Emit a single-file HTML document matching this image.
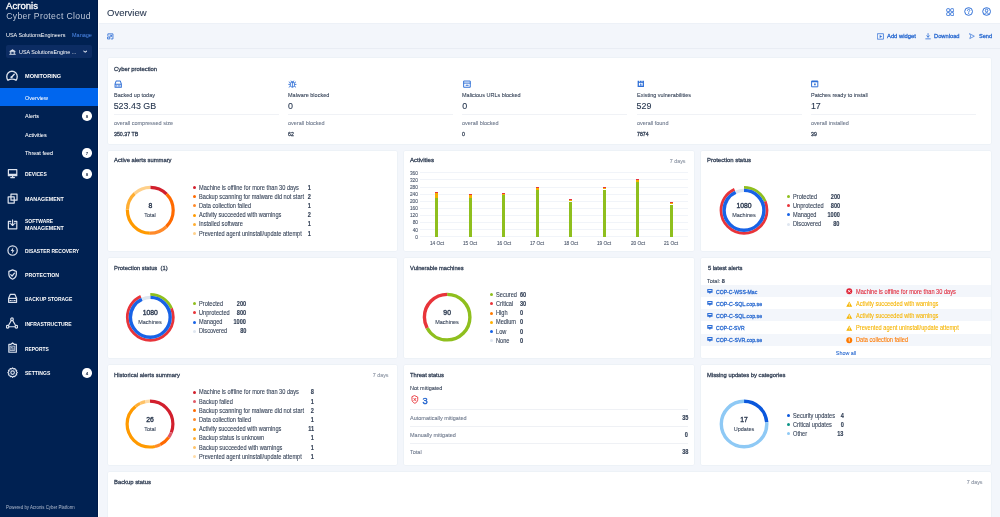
<!DOCTYPE html><html><head><meta charset="utf-8"><style>
*{margin:0;padding:0;box-sizing:border-box}
html,body{width:1000px;height:517px;overflow:hidden;background:#f3f6fb;font-family:"Liberation Sans",sans-serif}
.t{position:absolute;white-space:nowrap;line-height:1;-webkit-text-stroke:0.1px currentColor}
.t b,.b{-webkit-text-stroke:0}
.r{position:absolute}
svg{position:absolute;left:0;top:0}
</style></head><body><div id="root" style="position:absolute;left:0;top:0;width:1000px;height:517px;will-change:transform">
<div class="r" style="left:0px;top:0px;width:98.00px;height:517.00px;background:#002152;"></div>
<div class="r" style="left:96.5px;top:0px;width:1.50px;height:517.00px;background:#001a47;"></div>
<div class="r" style="left:98px;top:0px;width:902.00px;height:23.00px;background:#ffffff;"></div>
<div class="r" style="left:98px;top:23px;width:902.00px;height:1.00px;background:#edf1f7;"></div>
<div class="r" style="left:98px;top:24px;width:902.00px;height:24.00px;background:#f3f6fb;"></div>
<div class="r" style="left:98px;top:47.6px;width:902.00px;height:1.00px;background:#e9edf4;"></div>
<div class="r" style="left:98px;top:0px;width:1.00px;height:517.00px;background:#ffffff;"></div>
<div class="r" style="left:107.5px;top:58px;width:883.50px;height:86.30px;background:#ffffff;border-radius:1.2px;box-shadow:0 0 0 0.5px #e8edf4;"></div>
<div class="r" style="left:107.5px;top:150.5px;width:289.90px;height:100.70px;background:#ffffff;border-radius:1.2px;box-shadow:0 0 0 0.5px #e8edf4;"></div>
<div class="r" style="left:403.6px;top:150.5px;width:290.70px;height:100.70px;background:#ffffff;border-radius:1.2px;box-shadow:0 0 0 0.5px #e8edf4;"></div>
<div class="r" style="left:700.9px;top:150.5px;width:290.10px;height:100.70px;background:#ffffff;border-radius:1.2px;box-shadow:0 0 0 0.5px #e8edf4;"></div>
<div class="r" style="left:107.5px;top:257.8px;width:289.90px;height:100.40px;background:#ffffff;border-radius:1.2px;box-shadow:0 0 0 0.5px #e8edf4;"></div>
<div class="r" style="left:403.6px;top:257.8px;width:290.70px;height:100.40px;background:#ffffff;border-radius:1.2px;box-shadow:0 0 0 0.5px #e8edf4;"></div>
<div class="r" style="left:700.9px;top:257.8px;width:290.10px;height:100.40px;background:#ffffff;border-radius:1.2px;box-shadow:0 0 0 0.5px #e8edf4;"></div>
<div class="r" style="left:107.5px;top:364.8px;width:289.90px;height:100.30px;background:#ffffff;border-radius:1.2px;box-shadow:0 0 0 0.5px #e8edf4;"></div>
<div class="r" style="left:403.6px;top:364.8px;width:290.70px;height:100.30px;background:#ffffff;border-radius:1.2px;box-shadow:0 0 0 0.5px #e8edf4;"></div>
<div class="r" style="left:700.9px;top:364.8px;width:290.10px;height:100.30px;background:#ffffff;border-radius:1.2px;box-shadow:0 0 0 0.5px #e8edf4;"></div>
<div class="r" style="left:107.5px;top:471.7px;width:883.50px;height:128.30px;background:#ffffff;border-radius:1.2px;box-shadow:0 0 0 0.5px #e8edf4;"></div>
<div class="t" style="top:2.00px;font-size:9.200px;color:#ffffff;left:6.40px;transform:scaleX(1.0432);transform-origin:left center;-webkit-text-stroke:0.3px #fff;">Acronis</div>
<div class="t" style="top:12.00px;font-size:8.600px;color:#bec8d9;left:6.20px;letter-spacing:0.38px;-webkit-text-stroke:0;">Cyber Protect Cloud</div>
<div class="t" style="top:32.00px;font-size:6.115px;color:#ffffff;left:6.00px;transform:scaleX(0.8929);transform-origin:left center;-webkit-text-stroke:0;">USA SolutionsEngineers</div>
<div class="t" style="top:32.00px;font-size:6.160px;color:#4f8df0;left:72.00px;transform:scaleX(0.8929);transform-origin:left center;-webkit-text-stroke:0;">Manage</div>
<div class="r" style="left:5.8px;top:45.2px;width:86.40px;height:12.50px;background:#0c2c63;border-radius:2px;"></div>
<div class="t" style="top:49.00px;font-size:6.048px;color:#ffffff;left:18.60px;transform:scaleX(0.8929);transform-origin:left center;-webkit-text-stroke:0;">USA SolutionsEngine ...</div>
<div class="r" style="left:0px;top:88px;width:97.70px;height:18.40px;background:#0066ee;"></div>
<div class="t" style="top:74.00px;font-size:5.600px;color:#ffffff;font-weight:bold;-webkit-text-stroke:0;left:24.70px;transform:scaleX(0.9974);transform-origin:left center;">MONITORING</div>
<div class="t" style="top:96.00px;font-size:5.885px;color:#ffffff;left:24.70px;transform:scaleX(0.9337);transform-origin:left center;-webkit-text-stroke:0.04px #fff;">Overview</div>
<div class="t" style="top:114.00px;font-size:5.885px;color:#ffffff;left:24.70px;transform:scaleX(0.9346);transform-origin:left center;-webkit-text-stroke:0.04px #fff;">Alerts</div>
<div class="r" style="left:82.2px;top:111.3px;width:9.60px;height:9.60px;background:#ffffff;border-radius:50%;"></div>
<div class="t" style="top:115.00px;font-size:4.400px;color:#1f2f4a;font-weight:bold;-webkit-text-stroke:0;left:37.00px;width:100px;text-align:center;">8</div>
<div class="t" style="top:133.00px;font-size:5.885px;color:#ffffff;left:24.70px;transform:scaleX(0.9346);transform-origin:left center;-webkit-text-stroke:0.04px #fff;">Activities</div>
<div class="t" style="top:151.00px;font-size:5.885px;color:#ffffff;left:24.70px;transform:scaleX(0.9346);transform-origin:left center;-webkit-text-stroke:0.04px #fff;">Threat feed</div>
<div class="r" style="left:82.2px;top:148.0px;width:9.60px;height:9.60px;background:#ffffff;border-radius:50%;"></div>
<div class="t" style="top:152.00px;font-size:4.400px;color:#1f2f4a;font-weight:bold;-webkit-text-stroke:0;left:37.00px;width:100px;text-align:center;">7</div>
<div class="t" style="top:172.00px;font-size:5.600px;color:#ffffff;font-weight:bold;-webkit-text-stroke:0;left:24.70px;transform:scaleX(0.8826);transform-origin:left center;">DEVICES</div>
<div class="r" style="left:82.2px;top:169.39999999999998px;width:9.60px;height:9.60px;background:#ffffff;border-radius:50%;"></div>
<div class="t" style="top:173.00px;font-size:4.400px;color:#1f2f4a;font-weight:bold;-webkit-text-stroke:0;left:37.00px;width:100px;text-align:center;">8</div>
<div class="t" style="top:197.00px;font-size:5.600px;color:#ffffff;font-weight:bold;-webkit-text-stroke:0;left:24.70px;transform:scaleX(0.9545);transform-origin:left center;">MANAGEMENT</div>
<div class="t" style="top:219.00px;font-size:5.600px;color:#ffffff;font-weight:bold;-webkit-text-stroke:0;left:24.70px;transform:scaleX(0.8887);transform-origin:left center;">SOFTWARE</div>
<div class="t" style="top:226.00px;font-size:5.600px;color:#ffffff;font-weight:bold;-webkit-text-stroke:0;left:24.70px;transform:scaleX(0.9545);transform-origin:left center;">MANAGEMENT</div>
<div class="t" style="top:249.00px;font-size:5.600px;color:#ffffff;font-weight:bold;-webkit-text-stroke:0;left:24.70px;transform:scaleX(0.8872);transform-origin:left center;">DISASTER RECOVERY</div>
<div class="t" style="top:273.00px;font-size:5.600px;color:#ffffff;font-weight:bold;-webkit-text-stroke:0;left:24.70px;transform:scaleX(0.9289);transform-origin:left center;">PROTECTION</div>
<div class="t" style="top:297.00px;font-size:5.600px;color:#ffffff;font-weight:bold;-webkit-text-stroke:0;left:24.70px;transform:scaleX(0.8943);transform-origin:left center;">BACKUP STORAGE</div>
<div class="t" style="top:322.00px;font-size:5.600px;color:#ffffff;font-weight:bold;-webkit-text-stroke:0;left:24.70px;transform:scaleX(0.9043);transform-origin:left center;">INFRASTRUCTURE</div>
<div class="t" style="top:347.00px;font-size:5.600px;color:#ffffff;font-weight:bold;-webkit-text-stroke:0;left:24.70px;transform:scaleX(0.8755);transform-origin:left center;">REPORTS</div>
<div class="t" style="top:371.00px;font-size:5.600px;color:#ffffff;font-weight:bold;-webkit-text-stroke:0;left:24.70px;transform:scaleX(0.9035);transform-origin:left center;">SETTINGS</div>
<div class="r" style="left:82.2px;top:368.09999999999997px;width:9.60px;height:9.60px;background:#ffffff;border-radius:50%;"></div>
<div class="t" style="top:372.00px;font-size:4.400px;color:#1f2f4a;font-weight:bold;-webkit-text-stroke:0;left:37.00px;width:100px;text-align:center;">4</div>
<div class="t" style="top:506.00px;font-size:4.894px;color:#b3bed0;left:6.00px;transform:scaleX(0.8929);transform-origin:left center;-webkit-text-stroke:0;">Powered by Acronis Cyber Platform</div>
<div class="t" style="top:8.00px;font-size:9.600px;color:#2b3a52;left:107.20px;transform:scaleX(0.9898);transform-origin:left center;">Overview</div>
<div class="t" style="top:33.00px;font-size:6.123px;color:#2a6ad0;left:886.90px;transform:scaleX(0.9533);transform-origin:left center;-webkit-text-stroke:0.3px currentColor;">Add widget</div>
<div class="t" style="top:33.00px;font-size:6.123px;color:#2a6ad0;left:934.40px;transform:scaleX(0.9403);transform-origin:left center;-webkit-text-stroke:0.3px currentColor;">Download</div>
<div class="t" style="top:33.00px;font-size:6.123px;color:#2a6ad0;left:978.60px;transform:scaleX(0.9163);transform-origin:left center;-webkit-text-stroke:0.3px currentColor;">Send</div>
<div class="t" style="top:66.00px;font-size:6.059px;color:#364358;left:113.70px;transform:scaleX(0.9719);transform-origin:left center;-webkit-text-stroke:0.3px currentColor;">Cyber protection</div>
<div class="t" style="top:92.00px;font-size:6.160px;color:#364358;left:113.70px;transform:scaleX(0.8929);transform-origin:left center;">Backed up today</div>
<div class="t" style="top:102.00px;font-size:8.900px;color:#26364f;left:113.70px;">523.43 GB</div>
<div class="r" style="left:113.7px;top:114.2px;width:165.00px;height:0.70px;background:#f0f2f6;"></div>
<div class="t" style="top:120.00px;font-size:6.160px;color:#6f7a8d;left:113.70px;transform:scaleX(0.8929);transform-origin:left center;">overall compressed size</div>
<div class="t" style="top:132.00px;font-size:5.728px;color:#364358;left:113.70px;transform:scaleX(0.9222);transform-origin:left center;-webkit-text-stroke:0.3px currentColor;">350.37 TB</div>
<div class="t" style="top:92.00px;font-size:6.160px;color:#364358;left:288.00px;transform:scaleX(0.8929);transform-origin:left center;">Malware blocked</div>
<div class="t" style="top:102.00px;font-size:8.900px;color:#26364f;left:288.00px;">0</div>
<div class="r" style="left:288.0px;top:114.2px;width:165.00px;height:0.70px;background:#f0f2f6;"></div>
<div class="t" style="top:120.00px;font-size:6.160px;color:#6f7a8d;left:288.00px;transform:scaleX(0.8929);transform-origin:left center;">overall blocked</div>
<div class="t" style="top:132.00px;font-size:5.728px;color:#364358;left:288.00px;transform:scaleX(0.9078);transform-origin:left center;-webkit-text-stroke:0.3px currentColor;">62</div>
<div class="t" style="top:92.00px;font-size:6.160px;color:#364358;left:462.30px;transform:scaleX(0.8929);transform-origin:left center;">Malicious URLs blocked</div>
<div class="t" style="top:102.00px;font-size:8.900px;color:#26364f;left:462.30px;">0</div>
<div class="r" style="left:462.3px;top:114.2px;width:165.00px;height:0.70px;background:#f0f2f6;"></div>
<div class="t" style="top:120.00px;font-size:6.160px;color:#6f7a8d;left:462.30px;transform:scaleX(0.8929);transform-origin:left center;">overall blocked</div>
<div class="t" style="top:132.00px;font-size:5.728px;color:#364358;left:462.30px;transform:scaleX(0.9078);transform-origin:left center;-webkit-text-stroke:0.3px currentColor;">0</div>
<div class="t" style="top:92.00px;font-size:6.160px;color:#364358;left:636.60px;transform:scaleX(0.8929);transform-origin:left center;">Existing vulnerabilities</div>
<div class="t" style="top:102.00px;font-size:8.900px;color:#26364f;left:636.60px;">529</div>
<div class="r" style="left:636.6000000000001px;top:114.2px;width:165.00px;height:0.70px;background:#f0f2f6;"></div>
<div class="t" style="top:120.00px;font-size:6.160px;color:#6f7a8d;left:636.60px;transform:scaleX(0.8929);transform-origin:left center;">overall found</div>
<div class="t" style="top:132.00px;font-size:5.728px;color:#364358;left:636.60px;transform:scaleX(0.9078);transform-origin:left center;-webkit-text-stroke:0.3px currentColor;">7874</div>
<div class="t" style="top:92.00px;font-size:6.160px;color:#364358;left:810.90px;transform:scaleX(0.8929);transform-origin:left center;">Patches ready to install</div>
<div class="t" style="top:102.00px;font-size:8.900px;color:#26364f;left:810.90px;">17</div>
<div class="r" style="left:810.9000000000001px;top:114.2px;width:165.00px;height:0.70px;background:#f0f2f6;"></div>
<div class="t" style="top:120.00px;font-size:6.160px;color:#6f7a8d;left:810.90px;transform:scaleX(0.8929);transform-origin:left center;">overall installed</div>
<div class="t" style="top:132.00px;font-size:5.728px;color:#364358;left:810.90px;transform:scaleX(0.9078);transform-origin:left center;-webkit-text-stroke:0.3px currentColor;">39</div>
<div class="t" style="top:157.00px;font-size:6.059px;color:#364358;left:113.50px;transform:scaleX(0.9671);transform-origin:left center;-webkit-text-stroke:0.3px currentColor;">Active alerts summary</div>
<div class="t" style="top:157.00px;font-size:6.059px;color:#364358;left:410.00px;transform:scaleX(1.0044);transform-origin:left center;-webkit-text-stroke:0.3px currentColor;">Activities</div>
<div class="t" style="top:159.00px;font-size:5.936px;color:#8a93a2;right:314.40px;transform:scaleX(0.8929);transform-origin:right center;">7 days</div>
<div class="t" style="top:157.00px;font-size:6.059px;color:#364358;left:707.00px;transform:scaleX(0.9774);transform-origin:left center;-webkit-text-stroke:0.3px currentColor;">Protection status</div>
<div class="t" style="top:265.00px;font-size:6.059px;color:#364358;left:113.50px;transform:scaleX(0.9608);transform-origin:left center;-webkit-text-stroke:0.3px currentColor;">Protection status&nbsp; (1)</div>
<div class="t" style="top:265.00px;font-size:6.059px;color:#364358;left:410.00px;transform:scaleX(0.9550);transform-origin:left center;-webkit-text-stroke:0.3px currentColor;">Vulnerable machines</div>
<div class="t" style="top:265.00px;font-size:6.059px;color:#364358;left:707.50px;transform:scaleX(0.9580);transform-origin:left center;-webkit-text-stroke:0.3px currentColor;">5 latest alerts</div>
<div class="t" style="top:372.00px;font-size:6.059px;color:#364358;left:113.50px;transform:scaleX(0.9710);transform-origin:left center;-webkit-text-stroke:0.3px currentColor;">Historical alerts summary</div>
<div class="t" style="top:373.00px;font-size:5.936px;color:#8a93a2;right:611.40px;transform:scaleX(0.8929);transform-origin:right center;">7 days</div>
<div class="t" style="top:372.00px;font-size:6.059px;color:#364358;left:410.00px;transform:scaleX(0.9590);transform-origin:left center;-webkit-text-stroke:0.3px currentColor;">Threat status</div>
<div class="t" style="top:372.00px;font-size:6.059px;color:#364358;left:707.00px;transform:scaleX(0.9646);transform-origin:left center;-webkit-text-stroke:0.3px currentColor;">Missing updates by categories</div>
<div class="t" style="top:479.00px;font-size:6.059px;color:#364358;left:113.60px;transform:scaleX(0.9699);transform-origin:left center;-webkit-text-stroke:0.3px currentColor;">Backup status</div>
<div class="t" style="top:480.00px;font-size:5.936px;color:#8a93a2;right:17.90px;transform:scaleX(0.8929);transform-origin:right center;">7 days</div>
<div class="t" style="top:203.00px;font-size:6.800px;color:#364358;left:100.30px;width:100px;text-align:center;-webkit-text-stroke:0.4px currentColor;">8</div>
<div class="t" style="top:212.00px;font-size:6.160px;color:#364358;left:100.30px;width:100px;text-align:center;transform:scaleX(0.8929);transform-origin:center center;">Total</div>
<div class="r" style="left:193px;top:186.0px;width:3.00px;height:3.00px;background:#d21f2d;border-radius:50%;"></div>
<div class="t" style="top:185.00px;font-size:6.328px;color:#364358;left:199.10px;transform:scaleX(0.8929);transform-origin:left center;">Machine is offline for more than 30 days</div>
<div class="t" style="top:185.00px;font-size:6.720px;color:#364358;font-weight:bold;-webkit-text-stroke:0;right:689.00px;transform:scaleX(0.8333);transform-origin:right center;-webkit-text-stroke:0.15px currentColor;">1</div>
<div class="r" style="left:193px;top:195.2px;width:3.00px;height:3.00px;background:#ff6a00;border-radius:50%;"></div>
<div class="t" style="top:194.00px;font-size:6.328px;color:#364358;left:199.10px;transform:scaleX(0.8929);transform-origin:left center;">Backup scanning for malware did not start</div>
<div class="t" style="top:194.00px;font-size:6.720px;color:#364358;font-weight:bold;-webkit-text-stroke:0;right:689.00px;transform:scaleX(0.8333);transform-origin:right center;-webkit-text-stroke:0.15px currentColor;">2</div>
<div class="r" style="left:193px;top:204.4px;width:3.00px;height:3.00px;background:#ff8a2a;border-radius:50%;"></div>
<div class="t" style="top:203.00px;font-size:6.328px;color:#364358;left:199.10px;transform:scaleX(0.8929);transform-origin:left center;">Data collection failed</div>
<div class="t" style="top:203.00px;font-size:6.720px;color:#364358;font-weight:bold;-webkit-text-stroke:0;right:689.00px;transform:scaleX(0.8333);transform-origin:right center;-webkit-text-stroke:0.15px currentColor;">1</div>
<div class="r" style="left:193px;top:213.6px;width:3.00px;height:3.00px;background:#ff9a00;border-radius:50%;"></div>
<div class="t" style="top:212.00px;font-size:6.328px;color:#364358;left:199.10px;transform:scaleX(0.8929);transform-origin:left center;">Activity succeeded with warnings</div>
<div class="t" style="top:212.00px;font-size:6.720px;color:#364358;font-weight:bold;-webkit-text-stroke:0;right:689.00px;transform:scaleX(0.8333);transform-origin:right center;-webkit-text-stroke:0.15px currentColor;">2</div>
<div class="r" style="left:193px;top:222.8px;width:3.00px;height:3.00px;background:#ffae33;border-radius:50%;"></div>
<div class="t" style="top:221.00px;font-size:6.328px;color:#364358;left:199.10px;transform:scaleX(0.8929);transform-origin:left center;">Installed software</div>
<div class="t" style="top:221.00px;font-size:6.720px;color:#364358;font-weight:bold;-webkit-text-stroke:0;right:689.00px;transform:scaleX(0.8333);transform-origin:right center;-webkit-text-stroke:0.15px currentColor;">1</div>
<div class="r" style="left:193px;top:232.0px;width:3.00px;height:3.00px;background:#ffd08a;border-radius:50%;"></div>
<div class="t" style="top:231.00px;font-size:6.328px;color:#364358;left:199.10px;transform:scaleX(0.8929);transform-origin:left center;">Prevented agent uninstall/update attempt</div>
<div class="t" style="top:231.00px;font-size:6.720px;color:#364358;font-weight:bold;-webkit-text-stroke:0;right:689.00px;transform:scaleX(0.8333);transform-origin:right center;-webkit-text-stroke:0.15px currentColor;">1</div>
<div class="t" style="top:203.00px;font-size:6.800px;color:#364358;left:694.00px;width:100px;text-align:center;-webkit-text-stroke:0.4px currentColor;">1080</div>
<div class="t" style="top:212.00px;font-size:6.160px;color:#364358;left:694.00px;width:100px;text-align:center;transform:scaleX(0.8929);transform-origin:center center;">Machines</div>
<div class="r" style="left:786.7px;top:195.0px;width:3.00px;height:3.00px;background:#8fbf1e;border-radius:50%;"></div>
<div class="t" style="top:194.00px;font-size:6.328px;color:#364358;left:793.00px;transform:scaleX(0.8929);transform-origin:left center;">Protected</div>
<div class="t" style="top:194.00px;font-size:6.720px;color:#364358;font-weight:bold;-webkit-text-stroke:0;right:160.20px;transform:scaleX(0.8333);transform-origin:right center;-webkit-text-stroke:0.15px currentColor;">200</div>
<div class="r" style="left:786.7px;top:204.23px;width:3.00px;height:3.00px;background:#e8343a;border-radius:50%;"></div>
<div class="t" style="top:203.00px;font-size:6.328px;color:#364358;left:793.00px;transform:scaleX(0.8929);transform-origin:left center;">Unprotected</div>
<div class="t" style="top:203.00px;font-size:6.720px;color:#364358;font-weight:bold;-webkit-text-stroke:0;right:160.20px;transform:scaleX(0.8333);transform-origin:right center;-webkit-text-stroke:0.15px currentColor;">800</div>
<div class="r" style="left:786.7px;top:213.46px;width:3.00px;height:3.00px;background:#1863e6;border-radius:50%;"></div>
<div class="t" style="top:212.00px;font-size:6.328px;color:#364358;left:793.00px;transform:scaleX(0.8929);transform-origin:left center;">Managed</div>
<div class="t" style="top:212.00px;font-size:6.720px;color:#364358;font-weight:bold;-webkit-text-stroke:0;right:160.20px;transform:scaleX(0.8333);transform-origin:right center;-webkit-text-stroke:0.15px currentColor;">1000</div>
<div class="r" style="left:786.7px;top:222.69px;width:3.00px;height:3.00px;background:#dfe6f0;border-radius:50%;"></div>
<div class="t" style="top:221.00px;font-size:6.328px;color:#364358;left:793.00px;transform:scaleX(0.8929);transform-origin:left center;">Discovered</div>
<div class="t" style="top:221.00px;font-size:6.720px;color:#364358;font-weight:bold;-webkit-text-stroke:0;right:160.20px;transform:scaleX(0.8333);transform-origin:right center;-webkit-text-stroke:0.15px currentColor;">80</div>
<div class="t" style="top:310.00px;font-size:6.800px;color:#364358;left:100.30px;width:100px;text-align:center;-webkit-text-stroke:0.4px currentColor;">1080</div>
<div class="t" style="top:319.00px;font-size:6.160px;color:#364358;left:100.30px;width:100px;text-align:center;transform:scaleX(0.8929);transform-origin:center center;">Machines</div>
<div class="r" style="left:193.0px;top:302.1px;width:3.00px;height:3.00px;background:#8fbf1e;border-radius:50%;"></div>
<div class="t" style="top:301.00px;font-size:6.328px;color:#364358;left:199.30px;transform:scaleX(0.8929);transform-origin:left center;">Protected</div>
<div class="t" style="top:301.00px;font-size:6.720px;color:#364358;font-weight:bold;-webkit-text-stroke:0;right:754.00px;transform:scaleX(0.8333);transform-origin:right center;-webkit-text-stroke:0.15px currentColor;">200</div>
<div class="r" style="left:193.0px;top:311.33000000000004px;width:3.00px;height:3.00px;background:#e8343a;border-radius:50%;"></div>
<div class="t" style="top:310.00px;font-size:6.328px;color:#364358;left:199.30px;transform:scaleX(0.8929);transform-origin:left center;">Unprotected</div>
<div class="t" style="top:310.00px;font-size:6.720px;color:#364358;font-weight:bold;-webkit-text-stroke:0;right:754.00px;transform:scaleX(0.8333);transform-origin:right center;-webkit-text-stroke:0.15px currentColor;">800</div>
<div class="r" style="left:193.0px;top:320.56px;width:3.00px;height:3.00px;background:#1863e6;border-radius:50%;"></div>
<div class="t" style="top:319.00px;font-size:6.328px;color:#364358;left:199.30px;transform:scaleX(0.8929);transform-origin:left center;">Managed</div>
<div class="t" style="top:319.00px;font-size:6.720px;color:#364358;font-weight:bold;-webkit-text-stroke:0;right:754.00px;transform:scaleX(0.8333);transform-origin:right center;-webkit-text-stroke:0.15px currentColor;">1000</div>
<div class="r" style="left:193.0px;top:329.79px;width:3.00px;height:3.00px;background:#dfe6f0;border-radius:50%;"></div>
<div class="t" style="top:328.00px;font-size:6.328px;color:#364358;left:199.30px;transform:scaleX(0.8929);transform-origin:left center;">Discovered</div>
<div class="t" style="top:328.00px;font-size:6.720px;color:#364358;font-weight:bold;-webkit-text-stroke:0;right:754.00px;transform:scaleX(0.8333);transform-origin:right center;-webkit-text-stroke:0.15px currentColor;">80</div>
<div class="r" style="left:420.3px;top:172.35px;width:267.70px;height:0.50px;background:#f1f4f9;"></div>
<div class="t" style="top:171.00px;font-size:5.376px;color:#4b566a;right:581.60px;transform:scaleX(0.8929);transform-origin:right center;">360</div>
<div class="r" style="left:420.3px;top:179.4611111111111px;width:267.70px;height:0.50px;background:#f1f4f9;"></div>
<div class="t" style="top:178.00px;font-size:5.376px;color:#4b566a;right:581.60px;transform:scaleX(0.8929);transform-origin:right center;">320</div>
<div class="r" style="left:420.3px;top:186.57222222222222px;width:267.70px;height:0.50px;background:#f1f4f9;"></div>
<div class="t" style="top:185.00px;font-size:5.376px;color:#4b566a;right:581.60px;transform:scaleX(0.8929);transform-origin:right center;">280</div>
<div class="r" style="left:420.3px;top:193.68333333333334px;width:267.70px;height:0.50px;background:#f1f4f9;"></div>
<div class="t" style="top:192.00px;font-size:5.376px;color:#4b566a;right:581.60px;transform:scaleX(0.8929);transform-origin:right center;">240</div>
<div class="r" style="left:420.3px;top:200.79444444444442px;width:267.70px;height:0.50px;background:#f1f4f9;"></div>
<div class="t" style="top:199.00px;font-size:5.376px;color:#4b566a;right:581.60px;transform:scaleX(0.8929);transform-origin:right center;">200</div>
<div class="r" style="left:420.3px;top:207.90555555555557px;width:267.70px;height:0.50px;background:#f1f4f9;"></div>
<div class="t" style="top:206.00px;font-size:5.376px;color:#4b566a;right:581.60px;transform:scaleX(0.8929);transform-origin:right center;">160</div>
<div class="r" style="left:420.3px;top:215.01666666666665px;width:267.70px;height:0.50px;background:#f1f4f9;"></div>
<div class="t" style="top:213.00px;font-size:5.376px;color:#4b566a;right:581.60px;transform:scaleX(0.8929);transform-origin:right center;">120</div>
<div class="r" style="left:420.3px;top:222.12777777777777px;width:267.70px;height:0.50px;background:#f1f4f9;"></div>
<div class="t" style="top:220.00px;font-size:5.376px;color:#4b566a;right:581.60px;transform:scaleX(0.8929);transform-origin:right center;">80</div>
<div class="r" style="left:420.3px;top:229.23888888888888px;width:267.70px;height:0.50px;background:#f1f4f9;"></div>
<div class="t" style="top:228.00px;font-size:5.376px;color:#4b566a;right:581.60px;transform:scaleX(0.8929);transform-origin:right center;">40</div>
<div class="r" style="left:420.3px;top:236.35px;width:267.70px;height:0.50px;background:#f1f4f9;"></div>
<div class="t" style="top:235.00px;font-size:5.376px;color:#4b566a;right:581.60px;transform:scaleX(0.8929);transform-origin:right center;">0</div>
<div class="r" style="left:435.1px;top:191.8px;width:3.00px;height:1.20px;background:#e8343a;"></div>
<div class="r" style="left:435.1px;top:193px;width:3.00px;height:4.50px;background:#f5b000;"></div>
<div class="r" style="left:435.1px;top:197.5px;width:3.00px;height:39.10px;background:#8fbf1e;"></div>
<div class="t" style="top:241.00px;font-size:5.376px;color:#4b566a;left:386.60px;width:100px;text-align:center;transform:scaleX(0.8929);transform-origin:center center;">14 Oct</div>
<div class="r" style="left:468.65000000000003px;top:193.9px;width:3.00px;height:1.40px;background:#e8343a;"></div>
<div class="r" style="left:468.65000000000003px;top:195.3px;width:3.00px;height:2.60px;background:#f5b000;"></div>
<div class="r" style="left:468.65000000000003px;top:197.9px;width:3.00px;height:38.70px;background:#8fbf1e;"></div>
<div class="t" style="top:241.00px;font-size:5.376px;color:#4b566a;left:420.15px;width:100px;text-align:center;transform:scaleX(0.8929);transform-origin:center center;">15 Oct</div>
<div class="r" style="left:502.20000000000005px;top:192.8px;width:3.00px;height:1.20px;background:#e8343a;"></div>
<div class="r" style="left:502.20000000000005px;top:194.0px;width:3.00px;height:0.70px;background:#f5b000;"></div>
<div class="r" style="left:502.20000000000005px;top:194.7px;width:3.00px;height:41.90px;background:#8fbf1e;"></div>
<div class="t" style="top:241.00px;font-size:5.376px;color:#4b566a;left:453.70px;width:100px;text-align:center;transform:scaleX(0.8929);transform-origin:center center;">16 Oct</div>
<div class="r" style="left:535.75px;top:187px;width:3.00px;height:1.20px;background:#e8343a;"></div>
<div class="r" style="left:535.75px;top:188.2px;width:3.00px;height:1.80px;background:#f5b000;"></div>
<div class="r" style="left:535.75px;top:190px;width:3.00px;height:46.60px;background:#8fbf1e;"></div>
<div class="t" style="top:241.00px;font-size:5.376px;color:#4b566a;left:487.25px;width:100px;text-align:center;transform:scaleX(0.8929);transform-origin:center center;">17 Oct</div>
<div class="r" style="left:569.3px;top:199px;width:3.00px;height:1.20px;background:#e8343a;"></div>
<div class="r" style="left:569.3px;top:200.2px;width:3.00px;height:1.30px;background:#f5b000;"></div>
<div class="r" style="left:569.3px;top:201.5px;width:3.00px;height:35.10px;background:#8fbf1e;"></div>
<div class="t" style="top:241.00px;font-size:5.376px;color:#4b566a;left:520.80px;width:100px;text-align:center;transform:scaleX(0.8929);transform-origin:center center;">18 Oct</div>
<div class="r" style="left:602.85px;top:187px;width:3.00px;height:1.20px;background:#e8343a;"></div>
<div class="r" style="left:602.85px;top:188.2px;width:3.00px;height:1.30px;background:#f5b000;"></div>
<div class="r" style="left:602.85px;top:189.5px;width:3.00px;height:47.10px;background:#8fbf1e;"></div>
<div class="t" style="top:241.00px;font-size:5.376px;color:#4b566a;left:554.35px;width:100px;text-align:center;transform:scaleX(0.8929);transform-origin:center center;">19 Oct</div>
<div class="r" style="left:636.4px;top:178.6px;width:3.00px;height:1.40px;background:#e8343a;"></div>
<div class="r" style="left:636.4px;top:180px;width:3.00px;height:1.70px;background:#f5b000;"></div>
<div class="r" style="left:636.4px;top:181.7px;width:3.00px;height:54.90px;background:#8fbf1e;"></div>
<div class="t" style="top:241.00px;font-size:5.376px;color:#4b566a;left:587.90px;width:100px;text-align:center;transform:scaleX(0.8929);transform-origin:center center;">20 Oct</div>
<div class="r" style="left:669.95px;top:202.1px;width:3.00px;height:1.10px;background:#e8343a;"></div>
<div class="r" style="left:669.95px;top:203.2px;width:3.00px;height:1.30px;background:#f5b000;"></div>
<div class="r" style="left:669.95px;top:204.5px;width:3.00px;height:32.10px;background:#8fbf1e;"></div>
<div class="t" style="top:241.00px;font-size:5.376px;color:#4b566a;left:621.45px;width:100px;text-align:center;transform:scaleX(0.8929);transform-origin:center center;">21 Oct</div>
<div class="t" style="top:310.00px;font-size:6.800px;color:#364358;left:397.15px;width:100px;text-align:center;-webkit-text-stroke:0.4px currentColor;">90</div>
<div class="t" style="top:319.00px;font-size:6.160px;color:#364358;left:397.15px;width:100px;text-align:center;transform:scaleX(0.8929);transform-origin:center center;">Machines</div>
<div class="r" style="left:489.5px;top:293.1px;width:3.00px;height:3.00px;background:#8fbf1e;border-radius:50%;"></div>
<div class="t" style="top:292.00px;font-size:6.328px;color:#364358;left:496.00px;transform:scaleX(0.8929);transform-origin:left center;">Secured</div>
<div class="t" style="top:292.00px;font-size:6.720px;color:#364358;font-weight:bold;-webkit-text-stroke:0;left:520.00px;transform:scaleX(0.8333);transform-origin:left center;-webkit-text-stroke:0.15px currentColor;">60</div>
<div class="r" style="left:489.5px;top:302.3px;width:3.00px;height:3.00px;background:#e8343a;border-radius:50%;"></div>
<div class="t" style="top:301.00px;font-size:6.328px;color:#364358;left:496.00px;transform:scaleX(0.8929);transform-origin:left center;">Critical</div>
<div class="t" style="top:301.00px;font-size:6.720px;color:#364358;font-weight:bold;-webkit-text-stroke:0;left:520.00px;transform:scaleX(0.8333);transform-origin:left center;-webkit-text-stroke:0.15px currentColor;">30</div>
<div class="r" style="left:489.5px;top:311.5px;width:3.00px;height:3.00px;background:#ff7a00;border-radius:50%;"></div>
<div class="t" style="top:310.00px;font-size:6.328px;color:#364358;left:496.00px;transform:scaleX(0.8929);transform-origin:left center;">High</div>
<div class="t" style="top:310.00px;font-size:6.720px;color:#364358;font-weight:bold;-webkit-text-stroke:0;left:520.00px;transform:scaleX(0.8333);transform-origin:left center;-webkit-text-stroke:0.15px currentColor;">0</div>
<div class="r" style="left:489.5px;top:320.70000000000005px;width:3.00px;height:3.00px;background:#ffb000;border-radius:50%;"></div>
<div class="t" style="top:319.00px;font-size:6.328px;color:#364358;left:496.00px;transform:scaleX(0.8929);transform-origin:left center;">Medium</div>
<div class="t" style="top:319.00px;font-size:6.720px;color:#364358;font-weight:bold;-webkit-text-stroke:0;left:520.00px;transform:scaleX(0.8333);transform-origin:left center;-webkit-text-stroke:0.15px currentColor;">0</div>
<div class="r" style="left:489.5px;top:329.90000000000003px;width:3.00px;height:3.00px;background:#1863e6;border-radius:50%;"></div>
<div class="t" style="top:329.00px;font-size:6.328px;color:#364358;left:496.00px;transform:scaleX(0.8929);transform-origin:left center;">Low</div>
<div class="t" style="top:329.00px;font-size:6.720px;color:#364358;font-weight:bold;-webkit-text-stroke:0;left:520.00px;transform:scaleX(0.8333);transform-origin:left center;-webkit-text-stroke:0.15px currentColor;">0</div>
<div class="r" style="left:489.5px;top:339.1px;width:3.00px;height:3.00px;background:#dfe6f0;border-radius:50%;"></div>
<div class="t" style="top:338.00px;font-size:6.328px;color:#364358;left:496.00px;transform:scaleX(0.8929);transform-origin:left center;">None</div>
<div class="t" style="top:338.00px;font-size:6.720px;color:#364358;font-weight:bold;-webkit-text-stroke:0;left:520.00px;transform:scaleX(0.8333);transform-origin:left center;-webkit-text-stroke:0.15px currentColor;">0</div>
<div class="t" style="top:278.00px;font-size:6.160px;color:#364358;left:707.30px;transform:scaleX(0.8929);transform-origin:left center;">Total: <b style="-webkit-text-stroke:0.2px currentColor">8</b></div>
<div class="r" style="left:701px;top:284.8px;width:290.00px;height:12.18px;background:#f3f6fb;"></div>
<div class="t" style="top:290.00px;font-size:5.826px;color:#2a6ad0;left:716.20px;transform:scaleX(0.8814);transform-origin:left center;-webkit-text-stroke:0.3px currentColor;">COP-C-WSS-Mac</div>
<div class="t" style="top:289.00px;font-size:6.328px;color:#e0283a;left:855.70px;transform:scaleX(0.8929);transform-origin:left center;">Machine is offline for more than 30 days</div>
<div class="t" style="top:302.00px;font-size:5.826px;color:#2a6ad0;left:716.20px;transform:scaleX(0.9029);transform-origin:left center;-webkit-text-stroke:0.3px currentColor;">COP-C-SQL.cop.se</div>
<div class="t" style="top:301.00px;font-size:6.328px;color:#f5b400;left:855.70px;transform:scaleX(0.8929);transform-origin:left center;">Activity succeeded with warnings</div>
<div class="r" style="left:701px;top:309.16px;width:290.00px;height:12.18px;background:#f3f6fb;"></div>
<div class="t" style="top:314.00px;font-size:5.826px;color:#2a6ad0;left:716.20px;transform:scaleX(0.9029);transform-origin:left center;-webkit-text-stroke:0.3px currentColor;">COP-C-SQL.cop.se</div>
<div class="t" style="top:313.00px;font-size:6.328px;color:#f5b400;left:855.70px;transform:scaleX(0.8929);transform-origin:left center;">Activity succeeded with warnings</div>
<div class="t" style="top:326.00px;font-size:5.826px;color:#2a6ad0;left:716.20px;transform:scaleX(0.8754);transform-origin:left center;-webkit-text-stroke:0.3px currentColor;">COP-C-SVR</div>
<div class="t" style="top:325.00px;font-size:6.328px;color:#f5b400;left:855.70px;transform:scaleX(0.8929);transform-origin:left center;">Prevented agent uninstall/update attempt</div>
<div class="r" style="left:701px;top:333.52px;width:290.00px;height:12.18px;background:#f3f6fb;"></div>
<div class="t" style="top:338.00px;font-size:5.826px;color:#2a6ad0;left:716.20px;transform:scaleX(0.8973);transform-origin:left center;-webkit-text-stroke:0.3px currentColor;">COP-C-SVR.cop.se</div>
<div class="t" style="top:337.00px;font-size:6.328px;color:#ff7a00;left:855.70px;transform:scaleX(0.8929);transform-origin:left center;">Data collection failed</div>
<div class="t" style="top:350.00px;font-size:6.048px;color:#2a6ad0;left:796.00px;width:100px;text-align:center;transform:scaleX(0.8929);transform-origin:center center;">Show all</div>
<div class="t" style="top:417.00px;font-size:6.800px;color:#364358;left:100.00px;width:100px;text-align:center;-webkit-text-stroke:0.4px currentColor;">26</div>
<div class="t" style="top:426.00px;font-size:6.160px;color:#364358;left:100.00px;width:100px;text-align:center;transform:scaleX(0.8929);transform-origin:center center;">Total</div>
<div class="r" style="left:193px;top:390.8px;width:3.00px;height:3.00px;background:#d21f2d;border-radius:50%;"></div>
<div class="t" style="top:389.00px;font-size:6.328px;color:#364358;left:199.10px;transform:scaleX(0.8929);transform-origin:left center;">Machine is offline for more than 30 days</div>
<div class="t" style="top:389.00px;font-size:6.720px;color:#364358;font-weight:bold;-webkit-text-stroke:0;right:686.40px;transform:scaleX(0.8333);transform-origin:right center;-webkit-text-stroke:0.15px currentColor;">8</div>
<div class="r" style="left:193px;top:400.01px;width:3.00px;height:3.00px;background:#e05a68;border-radius:50%;"></div>
<div class="t" style="top:399.00px;font-size:6.328px;color:#364358;left:199.10px;transform:scaleX(0.8929);transform-origin:left center;">Backup failed</div>
<div class="t" style="top:399.00px;font-size:6.720px;color:#364358;font-weight:bold;-webkit-text-stroke:0;right:686.40px;transform:scaleX(0.8333);transform-origin:right center;-webkit-text-stroke:0.15px currentColor;">1</div>
<div class="r" style="left:193px;top:409.22px;width:3.00px;height:3.00px;background:#ff6a00;border-radius:50%;"></div>
<div class="t" style="top:408.00px;font-size:6.328px;color:#364358;left:199.10px;transform:scaleX(0.8929);transform-origin:left center;">Backup scanning for malware did not start</div>
<div class="t" style="top:408.00px;font-size:6.720px;color:#364358;font-weight:bold;-webkit-text-stroke:0;right:686.40px;transform:scaleX(0.8333);transform-origin:right center;-webkit-text-stroke:0.15px currentColor;">2</div>
<div class="r" style="left:193px;top:418.43px;width:3.00px;height:3.00px;background:#ff8a2a;border-radius:50%;"></div>
<div class="t" style="top:417.00px;font-size:6.328px;color:#364358;left:199.10px;transform:scaleX(0.8929);transform-origin:left center;">Data collection failed</div>
<div class="t" style="top:417.00px;font-size:6.720px;color:#364358;font-weight:bold;-webkit-text-stroke:0;right:686.40px;transform:scaleX(0.8333);transform-origin:right center;-webkit-text-stroke:0.15px currentColor;">1</div>
<div class="r" style="left:193px;top:427.64px;width:3.00px;height:3.00px;background:#ff9a00;border-radius:50%;"></div>
<div class="t" style="top:426.00px;font-size:6.328px;color:#364358;left:199.10px;transform:scaleX(0.8929);transform-origin:left center;">Activity succeeded with warnings</div>
<div class="t" style="top:426.00px;font-size:6.720px;color:#364358;font-weight:bold;-webkit-text-stroke:0;right:686.40px;transform:scaleX(0.8333);transform-origin:right center;-webkit-text-stroke:0.15px currentColor;">11</div>
<div class="r" style="left:193px;top:436.85px;width:3.00px;height:3.00px;background:#ffae33;border-radius:50%;"></div>
<div class="t" style="top:435.00px;font-size:6.328px;color:#364358;left:199.10px;transform:scaleX(0.8929);transform-origin:left center;">Backup status is unknown</div>
<div class="t" style="top:435.00px;font-size:6.720px;color:#364358;font-weight:bold;-webkit-text-stroke:0;right:686.40px;transform:scaleX(0.8333);transform-origin:right center;-webkit-text-stroke:0.15px currentColor;">1</div>
<div class="r" style="left:193px;top:446.06px;width:3.00px;height:3.00px;background:#ffc266;border-radius:50%;"></div>
<div class="t" style="top:445.00px;font-size:6.328px;color:#364358;left:199.10px;transform:scaleX(0.8929);transform-origin:left center;">Backup succeeded with warnings</div>
<div class="t" style="top:445.00px;font-size:6.720px;color:#364358;font-weight:bold;-webkit-text-stroke:0;right:686.40px;transform:scaleX(0.8333);transform-origin:right center;-webkit-text-stroke:0.15px currentColor;">1</div>
<div class="r" style="left:193px;top:455.27px;width:3.00px;height:3.00px;background:#ffdca8;border-radius:50%;"></div>
<div class="t" style="top:454.00px;font-size:6.328px;color:#364358;left:199.10px;transform:scaleX(0.8929);transform-origin:left center;">Prevented agent uninstall/update attempt</div>
<div class="t" style="top:454.00px;font-size:6.720px;color:#364358;font-weight:bold;-webkit-text-stroke:0;right:686.40px;transform:scaleX(0.8333);transform-origin:right center;-webkit-text-stroke:0.15px currentColor;">1</div>
<div class="t" style="top:385.00px;font-size:6.160px;color:#364358;left:410.00px;transform:scaleX(0.8929);transform-origin:left center;">Not mitigated</div>
<div class="t" style="top:397.00px;font-size:9.300px;color:#2a6ad0;left:422.60px;-webkit-text-stroke:0.45px currentColor;">3</div>
<div class="r" style="left:410px;top:408.8px;width:278.00px;height:0.60px;background:#eff1f5;"></div>
<div class="r" style="left:410px;top:426.2px;width:278.00px;height:0.60px;background:#eff1f5;"></div>
<div class="r" style="left:410px;top:443.3px;width:278.00px;height:0.60px;background:#eff1f5;"></div>
<div class="t" style="top:415.00px;font-size:6.160px;color:#6f7a8d;left:410.00px;transform:scaleX(0.8929);transform-origin:left center;">Automatically mitigated</div>
<div class="t" style="top:415.00px;font-size:6.720px;color:#364358;font-weight:bold;-webkit-text-stroke:0;right:312.00px;transform:scaleX(0.8333);transform-origin:right center;-webkit-text-stroke:0.15px currentColor;">35</div>
<div class="t" style="top:432.00px;font-size:6.160px;color:#6f7a8d;left:410.00px;transform:scaleX(0.8929);transform-origin:left center;">Manually mitigated</div>
<div class="t" style="top:432.00px;font-size:6.720px;color:#364358;font-weight:bold;-webkit-text-stroke:0;right:312.00px;transform:scaleX(0.8333);transform-origin:right center;-webkit-text-stroke:0.15px currentColor;">0</div>
<div class="t" style="top:449.00px;font-size:6.160px;color:#6f7a8d;left:410.00px;transform:scaleX(0.8929);transform-origin:left center;">Total</div>
<div class="t" style="top:449.00px;font-size:6.720px;color:#364358;font-weight:bold;-webkit-text-stroke:0;right:312.00px;transform:scaleX(0.8333);transform-origin:right center;-webkit-text-stroke:0.15px currentColor;">38</div>
<div class="t" style="top:417.00px;font-size:6.800px;color:#364358;left:694.05px;width:100px;text-align:center;-webkit-text-stroke:0.4px currentColor;">17</div>
<div class="t" style="top:426.00px;font-size:6.160px;color:#364358;left:694.05px;width:100px;text-align:center;transform:scaleX(0.8929);transform-origin:center center;">Updates</div>
<div class="r" style="left:786.5px;top:413.9px;width:3.00px;height:3.00px;background:#0a57dc;border-radius:50%;"></div>
<div class="t" style="top:413.00px;font-size:6.328px;color:#364358;left:793.00px;transform:scaleX(0.8929);transform-origin:left center;">Security updates</div>
<div class="t" style="top:413.00px;font-size:6.720px;color:#364358;font-weight:bold;-webkit-text-stroke:0;right:156.60px;transform:scaleX(0.8333);transform-origin:right center;-webkit-text-stroke:0.15px currentColor;">4</div>
<div class="r" style="left:786.5px;top:423.09999999999997px;width:3.00px;height:3.00px;background:#0d9488;border-radius:50%;"></div>
<div class="t" style="top:422.00px;font-size:6.328px;color:#364358;left:793.00px;transform:scaleX(0.8929);transform-origin:left center;">Critical updates</div>
<div class="t" style="top:422.00px;font-size:6.720px;color:#364358;font-weight:bold;-webkit-text-stroke:0;right:156.60px;transform:scaleX(0.8333);transform-origin:right center;-webkit-text-stroke:0.15px currentColor;">0</div>
<div class="r" style="left:786.5px;top:432.29999999999995px;width:3.00px;height:3.00px;background:#8ec9f5;border-radius:50%;"></div>
<div class="t" style="top:431.00px;font-size:6.328px;color:#364358;left:793.00px;transform:scaleX(0.8929);transform-origin:left center;">Other</div>
<div class="t" style="top:431.00px;font-size:6.720px;color:#364358;font-weight:bold;-webkit-text-stroke:0;right:156.60px;transform:scaleX(0.8333);transform-origin:right center;-webkit-text-stroke:0.15px currentColor;">13</div>
<svg style="left:6.00px;top:69.80px;width:12.00px;height:12.00px" viewBox="0 0 24 24" preserveAspectRatio="none"><path d="M4 20.5 C2.2 18.5 1.5 15.5 1.5 13 A10.5 10.5 0 0 1 22.5 13 C22.5 15.5 21.8 18.5 20 20.5 C18 19 15.5 18.2 12 18.2 C8.5 18.2 6 19 4 20.5 Z" fill="none" stroke="#dde3ee" stroke-width="2.6" stroke-linecap="round" stroke-linejoin="round" /><path d="M11 14.5 L16.5 8.5" fill="none" stroke="#dde3ee" stroke-width="2.8" stroke-linecap="round" stroke-linejoin="round" /><circle cx="11" cy="14.5" r="2.2" fill="#dde3ee"/></svg>
<svg style="left:6.60px;top:168.30px;width:11.20px;height:11.20px" viewBox="0 0 24 24" preserveAspectRatio="none"><path d="M3 3.5 H21 V16.5 H3 Z M3 13.5 H21 M12 16.5 V20.5 M8 20.5 H16" fill="none" stroke="#dde3ee" stroke-width="2.6" stroke-linecap="round" stroke-linejoin="round" /></svg>
<svg style="left:6.60px;top:192.90px;width:11.20px;height:11.20px" viewBox="0 0 24 24" preserveAspectRatio="none"><path d="M8.5 2.5 H21.5 V15.5 H8.5 Z" fill="none" stroke="#dde3ee" stroke-width="2.6" stroke-linecap="round" stroke-linejoin="round" /><path d="M2.5 8.5 H15.5 V21.5 H2.5 Z" fill="none" stroke="#dde3ee" stroke-width="2.6" stroke-linecap="round" stroke-linejoin="round" /></svg>
<svg style="left:6.60px;top:218.60px;width:11.20px;height:11.20px" viewBox="0 0 24 24" preserveAspectRatio="none"><path d="M8 5 H3 V21 H21 V5 H16" fill="none" stroke="#dde3ee" stroke-width="2.6" stroke-linecap="round" stroke-linejoin="round" /><path d="M12 2 V14 M8.5 10.5 L12 14 L15.5 10.5" fill="none" stroke="#dde3ee" stroke-width="2.4" stroke-linecap="round" stroke-linejoin="round" /><path d="M6 9 H8 M16 9 H18" fill="none" stroke="#dde3ee" stroke-width="2" stroke-linecap="round" stroke-linejoin="round" /></svg>
<svg style="left:6.60px;top:244.70px;width:11.20px;height:11.20px" viewBox="0 0 24 24" preserveAspectRatio="none"><circle cx="12" cy="12" r="10" fill="none" stroke="#dde3ee" stroke-width="2.6"/><path d="M13.5 5 L8 13 H11.5 L10.5 19 L16 11 H12.5 Z" fill="#dde3ee"/></svg>
<svg style="left:6.60px;top:268.80px;width:11.20px;height:11.20px" viewBox="0 0 24 24" preserveAspectRatio="none"><path d="M12 2 L20 5 V11.5 C20 16.5 16.5 20 12 22 C7.5 20 4 16.5 4 11.5 V5 Z" fill="none" stroke="#dde3ee" stroke-width="2.6" stroke-linecap="round" stroke-linejoin="round" /><path d="M8 12 L11 15 L16 9" fill="none" stroke="#dde3ee" stroke-width="2.6" stroke-linecap="round" stroke-linejoin="round" /></svg>
<svg style="left:6.60px;top:293.30px;width:11.20px;height:11.20px" viewBox="0 0 24 24" preserveAspectRatio="none"><path d="M7 3 H17 L20.5 11 V20 H3.5 V11 Z M3.5 11.5 H20.5" fill="none" stroke="#dde3ee" stroke-width="2.6" stroke-linecap="round" stroke-linejoin="round" /><path d="M6.5 16 H9 M12.5 16 H13 M16 16 H17.5" fill="none" stroke="#dde3ee" stroke-width="2.4" stroke-linecap="round" stroke-linejoin="round" /></svg>
<svg style="left:6.00px;top:317.40px;width:12.00px;height:12.00px" viewBox="0 0 24 24" preserveAspectRatio="none"><path d="M12 4.5 L3.5 19.5 H20.5 Z" fill="none" stroke="#dde3ee" stroke-width="2.4" stroke-linecap="round" stroke-linejoin="round" /><circle cx="12" cy="4.5" r="2.6" fill="#002152" stroke="#dde3ee" stroke-width="2.4"/><circle cx="3.2" cy="19.5" r="2.6" fill="#002152" stroke="#dde3ee" stroke-width="2.4"/><circle cx="20.8" cy="19.5" r="2.6" fill="#002152" stroke="#dde3ee" stroke-width="2.4"/></svg>
<svg style="left:6.60px;top:342.30px;width:11.20px;height:11.20px" viewBox="0 0 24 24" preserveAspectRatio="none"><path d="M4 5 H8.5 L12 2 L15.5 5 H20 V22 H4 Z" fill="none" stroke="#dde3ee" stroke-width="2.6" stroke-linecap="round" stroke-linejoin="round" /><path d="M7.5 9 H16.5 V18.5 H7.5 Z" fill="none" stroke="#dde3ee" stroke-width="1.8" stroke-linecap="round" stroke-linejoin="round" /><path d="M9.5 12 H11 M9.5 15 H11 M13 12.5 V16.5" fill="none" stroke="#dde3ee" stroke-width="1.8" stroke-linecap="round" stroke-linejoin="round" /></svg>
<svg style="left:6.60px;top:366.80px;width:11.20px;height:11.20px" viewBox="0 0 24 24" preserveAspectRatio="none"><path d="M12 1.8 L14 4 L17 3.2 L17.8 6.2 L20.8 7 L20 10 L22.2 12 L20 14 L20.8 17 L17.8 17.8 L17 20.8 L14 20 L12 22.2 L10 20 L7 20.8 L6.2 17.8 L3.2 17 L4 14 L1.8 12 L4 10 L3.2 7 L6.2 6.2 L7 3.2 L10 4 Z" fill="none" stroke="#dde3ee" stroke-width="2.4" stroke-linecap="round" stroke-linejoin="round" /><circle cx="12" cy="12" r="3.8" fill="none" stroke="#dde3ee" stroke-width="2.4"/></svg>
<svg style="left:9.20px;top:48.60px;width:7.00px;height:6.00px" viewBox="0 0 24 24" preserveAspectRatio="none"><path d="M12 1 L23 9 V10 H21 V20 H23 V23 H1 V20 H3 V10 H1 V9 Z" fill="#dde3ee"/><path d="M6 11 H9 V20 H6 Z M10.5 11 H13.5 V20 H10.5 Z M15 11 H18 V20 H15 Z" fill="#0c2c63"/></svg>
<svg style="left:82.80px;top:49.60px;width:4.40px;height:3.60px" viewBox="0 0 24 24" preserveAspectRatio="none"><path d="M4 7 L12 15 L20 7" fill="none" stroke="#dde3ee" stroke-width="6" stroke-linecap="round" stroke-linejoin="round" /></svg>
<svg style="left:945.80px;top:7.60px;width:8.40px;height:8.30px" viewBox="0 0 24 24" preserveAspectRatio="none"><rect x="2" y="2" width="8.6" height="8.6" rx="2.2" fill="none" stroke="#2f6fd6" stroke-width="2.6"/><rect x="13.4" y="2" width="8.6" height="8.6" rx="2.2" fill="none" stroke="#2f6fd6" stroke-width="2.6"/><rect x="2" y="13.4" width="8.6" height="8.6" rx="2.2" fill="none" stroke="#2f6fd6" stroke-width="2.6"/><rect x="13.4" y="13.4" width="8.6" height="8.6" rx="2.2" fill="none" stroke="#2f6fd6" stroke-width="2.6"/></svg>
<svg style="left:963.80px;top:7.20px;width:9.20px;height:9.00px" viewBox="0 0 24 24" preserveAspectRatio="none"><circle cx="12" cy="12" r="10.2" fill="none" stroke="#2f6fd6" stroke-width="2.6"/><path d="M9 9.2 C9 7.3 10.4 6.2 12.1 6.2 C13.9 6.2 15.1 7.4 15.1 8.9 C15.1 11 12.2 11.2 12.2 14" fill="none" stroke="#2f6fd6" stroke-width="2.4" stroke-linecap="round" stroke-linejoin="round" /><circle cx="12.2" cy="17.5" r="1.4" fill="#2f6fd6"/></svg>
<svg style="left:982.00px;top:7.20px;width:9.20px;height:9.00px" viewBox="0 0 24 24" preserveAspectRatio="none"><circle cx="12" cy="12" r="10.2" fill="none" stroke="#2f6fd6" stroke-width="2.6"/><ellipse cx="12" cy="9.5" rx="3.2" ry="4" fill="none" stroke="#2f6fd6" stroke-width="2.4"/><path d="M6 19.5 C7.5 16.5 9.5 15.5 12 15.5 C14.5 15.5 16.5 16.5 18 19.5" fill="none" stroke="#2f6fd6" stroke-width="2.4" stroke-linecap="round" stroke-linejoin="round" /></svg>
<svg style="left:106.80px;top:33.00px;width:6.80px;height:6.80px" viewBox="0 0 24 24" preserveAspectRatio="none"><path d="M3 9 V3 H21 V21 H15" fill="none" stroke="#2f6fd6" stroke-width="3" stroke-linecap="round" stroke-linejoin="round" /><path d="M3 14 H10 V21 H3 Z" fill="none" stroke="#2f6fd6" stroke-width="3" stroke-linecap="round" stroke-linejoin="round" /><path d="M10 14 L16 8 M11 8 H16 V13" fill="none" stroke="#2f6fd6" stroke-width="2.6" stroke-linecap="round" stroke-linejoin="round" /></svg>
<svg style="left:877.00px;top:33.00px;width:7.20px;height:6.90px" viewBox="0 0 24 24" preserveAspectRatio="none"><path d="M2.5 2.5 H21.5 V21.5 H2.5 Z" fill="none" stroke="#2f6fd6" stroke-width="2.6" stroke-linecap="round" stroke-linejoin="round" /><path d="M9 7 L17 12 L9 17 Z" fill="#2f6fd6"/></svg>
<svg style="left:925.20px;top:33.00px;width:6.10px;height:6.70px" viewBox="0 0 24 24" preserveAspectRatio="none"><path d="M12 2 V15 M7 10 L12 15 L17 10 M3 21 H21" fill="none" stroke="#2f6fd6" stroke-width="3" stroke-linecap="round" stroke-linejoin="round" /></svg>
<svg style="left:969.40px;top:33.20px;width:6.10px;height:6.40px" viewBox="0 0 24 24" preserveAspectRatio="none"><path d="M3 3 L21 12 L3 21 L6.5 12 Z" fill="none" stroke="#2f6fd6" stroke-width="2.6" stroke-linecap="round" stroke-linejoin="round" /></svg>
<svg style="left:113.80px;top:79.90px;width:8.40px;height:8.60px" viewBox="0 0 24 24" preserveAspectRatio="none"><path d="M6 3 H18 L21 11 V20 H3 V11 Z M3 12 H21" fill="none" stroke="#2f6fd6" stroke-width="2.8" stroke-linecap="round" stroke-linejoin="round" /><path d="M6.5 16.5 H8.5 M12.5 16.5 H17" fill="none" stroke="#2f6fd6" stroke-width="2.6" stroke-linecap="round" stroke-linejoin="round" /></svg>
<svg style="left:287.90px;top:80.10px;width:8.80px;height:8.10px" viewBox="0 0 24 24" preserveAspectRatio="none"><path d="M12 6 C15.5 6 18 9 18 14 C18 18 15.5 21 12 21 C8.5 21 6 18 6 14 C6 9 8.5 6 12 6 Z M12 8 V21 M2 13 H6 M18 13 H22 M3 6 L7 9 M21 6 L17 9 M3 21 L7 18 M21 21 L17 18 M8.5 3 L10 6 M15.5 3 L14 6" fill="none" stroke="#2f6fd6" stroke-width="2.4" stroke-linecap="round" stroke-linejoin="round" /></svg>
<svg style="left:462.60px;top:79.90px;width:8.30px;height:8.30px" viewBox="0 0 24 24" preserveAspectRatio="none"><path d="M3 3 H21 V21 H3 Z M3 9 H21" fill="none" stroke="#2f6fd6" stroke-width="2.8" stroke-linecap="round" stroke-linejoin="round" /><path d="M9 15 H15" fill="none" stroke="#2f6fd6" stroke-width="3" stroke-linecap="round" stroke-linejoin="round" /></svg>
<svg style="left:636.80px;top:80.40px;width:7.60px;height:7.60px" viewBox="0 0 24 24" preserveAspectRatio="none"><path d="M2 2 H7 V5.5 H9.5 V2 H14.5 V5.5 H17 V2 H22 V22 H2 Z" fill="#2f6fd6"/><path d="M6 9 H18 V18 H6 Z" fill="#ffffff"/><path d="M10 13 L12 10.5 L14 13 V18 H10 Z" fill="#2f6fd6"/></svg>
<svg style="left:811.10px;top:80.30px;width:7.80px;height:7.80px" viewBox="0 0 24 24" preserveAspectRatio="none"><path d="M3 3 H21 V21 H3 Z" fill="none" stroke="#2f6fd6" stroke-width="3" stroke-linecap="round" stroke-linejoin="round" /><path d="M3 3 H21 V7 H3 Z" fill="#2f6fd6"/><path d="M9.5 11 H14.5 V16 H9.5 Z" fill="#2f6fd6"/></svg>
<svg style="left:707.30px;top:288.60px;width:5.80px;height:5.20px" viewBox="0 0 24 24" preserveAspectRatio="none"><path d="M1 1.5 Q1 0.5 2 0.5 H22 Q23 0.5 23 1.5 V16 Q23 17 22 17 H15.5 L12 23 L8.5 17 H2 Q1 17 1 16 Z" fill="#2f6fd6"/><path d="M5.5 5 H18.5 V9 H5.5 Z" fill="#ffffff"/></svg>
<svg style="left:707.30px;top:300.78px;width:5.80px;height:5.20px" viewBox="0 0 24 24" preserveAspectRatio="none"><path d="M1 1.5 Q1 0.5 2 0.5 H22 Q23 0.5 23 1.5 V16 Q23 17 22 17 H15.5 L12 23 L8.5 17 H2 Q1 17 1 16 Z" fill="#2f6fd6"/><path d="M5.5 5 H18.5 V9 H5.5 Z" fill="#ffffff"/></svg>
<svg style="left:707.30px;top:312.96px;width:5.80px;height:5.20px" viewBox="0 0 24 24" preserveAspectRatio="none"><path d="M1 1.5 Q1 0.5 2 0.5 H22 Q23 0.5 23 1.5 V16 Q23 17 22 17 H15.5 L12 23 L8.5 17 H2 Q1 17 1 16 Z" fill="#2f6fd6"/><path d="M5.5 5 H18.5 V9 H5.5 Z" fill="#ffffff"/></svg>
<svg style="left:707.30px;top:325.14px;width:5.80px;height:5.20px" viewBox="0 0 24 24" preserveAspectRatio="none"><path d="M1 1.5 Q1 0.5 2 0.5 H22 Q23 0.5 23 1.5 V16 Q23 17 22 17 H15.5 L12 23 L8.5 17 H2 Q1 17 1 16 Z" fill="#2f6fd6"/><path d="M5.5 5 H18.5 V9 H5.5 Z" fill="#ffffff"/></svg>
<svg style="left:707.30px;top:337.32px;width:5.80px;height:5.20px" viewBox="0 0 24 24" preserveAspectRatio="none"><path d="M1 1.5 Q1 0.5 2 0.5 H22 Q23 0.5 23 1.5 V16 Q23 17 22 17 H15.5 L12 23 L8.5 17 H2 Q1 17 1 16 Z" fill="#2f6fd6"/><path d="M5.5 5 H18.5 V9 H5.5 Z" fill="#ffffff"/></svg>
<svg style="left:846.20px;top:288.10px;width:6.50px;height:6.50px" viewBox="0 0 24 24" preserveAspectRatio="none"><circle cx="12" cy="12" r="11" fill="#e0283a"/><path d="M8.5 8.5 L15.5 15.5 M15.5 8.5 L8.5 15.5" fill="none" stroke="#ffffff" stroke-width="3" stroke-linecap="round" stroke-linejoin="round" /></svg>
<svg style="left:846.20px;top:300.80px;width:6.50px;height:6.00px" viewBox="0 0 24 24" preserveAspectRatio="none"><path d="M12 1.5 L23 22.5 H1 Z" fill="#f5b400"/><path d="M12 9 V15" fill="none" stroke="#ffffff" stroke-width="2.6" stroke-linecap="round" stroke-linejoin="round" /><circle cx="12" cy="18.5" r="1.5" fill="#fff"/></svg>
<svg style="left:846.20px;top:313.00px;width:6.50px;height:6.00px" viewBox="0 0 24 24" preserveAspectRatio="none"><path d="M12 1.5 L23 22.5 H1 Z" fill="#f5b400"/><path d="M12 9 V15" fill="none" stroke="#ffffff" stroke-width="2.6" stroke-linecap="round" stroke-linejoin="round" /><circle cx="12" cy="18.5" r="1.5" fill="#fff"/></svg>
<svg style="left:846.20px;top:325.20px;width:6.50px;height:6.00px" viewBox="0 0 24 24" preserveAspectRatio="none"><path d="M12 1.5 L23 22.5 H1 Z" fill="#f5b400"/><path d="M12 9 V15" fill="none" stroke="#ffffff" stroke-width="2.6" stroke-linecap="round" stroke-linejoin="round" /><circle cx="12" cy="18.5" r="1.5" fill="#fff"/></svg>
<svg style="left:846.20px;top:337.30px;width:6.50px;height:6.50px" viewBox="0 0 24 24" preserveAspectRatio="none"><circle cx="12" cy="12" r="11" fill="#ff7a00"/><path d="M12 6.5 V13" fill="none" stroke="#ffffff" stroke-width="3" stroke-linecap="round" stroke-linejoin="round" /><circle cx="12" cy="17" r="1.7" fill="#fff"/></svg>
<svg style="left:411.00px;top:395.40px;width:7.70px;height:9.00px" viewBox="0 0 24 24" preserveAspectRatio="none"><path d="M12 2 L21 5.5 V12 C21 17 17 20.5 12 22 C7 20.5 3 17 3 12 V5.5 Z" fill="none" stroke="#e8343a" stroke-width="2.6" stroke-linecap="round" stroke-linejoin="round" /><path d="M9 9 L15 15 M15 9 L9 15" fill="none" stroke="#e8343a" stroke-width="2.6" stroke-linecap="round" stroke-linejoin="round" /></svg>
<svg width="1000" height="517" viewBox="0 0 1000 517"><circle cx="150.3" cy="210.3" r="22.9" fill="none" stroke="#d21f2d" stroke-width="3.2" stroke-dasharray="17.986 143.885" stroke-dashoffset="-0.000" transform="rotate(-90 150.3 210.3)"/><circle cx="150.3" cy="210.3" r="22.9" fill="none" stroke="#ff6a00" stroke-width="3.2" stroke-dasharray="35.971 143.885" stroke-dashoffset="-17.986" transform="rotate(-90 150.3 210.3)"/><circle cx="150.3" cy="210.3" r="22.9" fill="none" stroke="#ff8a2a" stroke-width="3.2" stroke-dasharray="17.986 143.885" stroke-dashoffset="-53.957" transform="rotate(-90 150.3 210.3)"/><circle cx="150.3" cy="210.3" r="22.9" fill="none" stroke="#ff9a00" stroke-width="3.2" stroke-dasharray="35.971 143.885" stroke-dashoffset="-71.942" transform="rotate(-90 150.3 210.3)"/><circle cx="150.3" cy="210.3" r="22.9" fill="none" stroke="#ffae33" stroke-width="3.2" stroke-dasharray="17.986 143.885" stroke-dashoffset="-107.914" transform="rotate(-90 150.3 210.3)"/><circle cx="150.3" cy="210.3" r="22.9" fill="none" stroke="#ffd08a" stroke-width="3.2" stroke-dasharray="17.986 143.885" stroke-dashoffset="-125.899" transform="rotate(-90 150.3 210.3)"/><circle cx="744.0" cy="210.3" r="23.0" fill="none" stroke="#8fbf1e" stroke-width="2.8" stroke-dasharray="26.762 144.513" stroke-dashoffset="0.000" transform="rotate(-90 744.0 210.3)"/><circle cx="744.0" cy="210.3" r="23.0" fill="none" stroke="#e8343a" stroke-width="2.8" stroke-dasharray="107.047 144.513" stroke-dashoffset="-26.762" transform="rotate(-90 744.0 210.3)"/><circle cx="744.0" cy="210.3" r="19.9" fill="none" stroke="#1863e6" stroke-width="3.4" stroke-dasharray="115.774 125.035" stroke-dashoffset="0.000" transform="rotate(-90 744.0 210.3)"/><circle cx="744.0" cy="210.3" r="19.9" fill="none" stroke="#dfe6f0" stroke-width="3.4" stroke-dasharray="9.262 125.035" stroke-dashoffset="-115.774" transform="rotate(-90 744.0 210.3)"/><circle cx="150.3" cy="317.3" r="23.0" fill="none" stroke="#8fbf1e" stroke-width="2.8" stroke-dasharray="26.762 144.513" stroke-dashoffset="0.000" transform="rotate(-90 150.3 317.3)"/><circle cx="150.3" cy="317.3" r="23.0" fill="none" stroke="#e8343a" stroke-width="2.8" stroke-dasharray="107.047 144.513" stroke-dashoffset="-26.762" transform="rotate(-90 150.3 317.3)"/><circle cx="150.3" cy="317.3" r="19.9" fill="none" stroke="#1863e6" stroke-width="3.4" stroke-dasharray="115.774 125.035" stroke-dashoffset="0.000" transform="rotate(-90 150.3 317.3)"/><circle cx="150.3" cy="317.3" r="19.9" fill="none" stroke="#dfe6f0" stroke-width="3.4" stroke-dasharray="9.262 125.035" stroke-dashoffset="-115.774" transform="rotate(-90 150.3 317.3)"/><circle cx="447.15" cy="317.15" r="22.75" fill="none" stroke="#8fbf1e" stroke-width="3.4" stroke-dasharray="95.295 142.942" stroke-dashoffset="0.000" transform="rotate(-90 447.15 317.15)"/><circle cx="447.15" cy="317.15" r="22.75" fill="none" stroke="#e8343a" stroke-width="3.4" stroke-dasharray="47.647 142.942" stroke-dashoffset="-95.295" transform="rotate(-90 447.15 317.15)"/><circle cx="150" cy="424.1" r="22.9" fill="none" stroke="#d21f2d" stroke-width="3.2" stroke-dasharray="44.272 143.885" stroke-dashoffset="-0.000" transform="rotate(-90 150 424.1)"/><circle cx="150" cy="424.1" r="22.9" fill="none" stroke="#e05a68" stroke-width="3.2" stroke-dasharray="5.534 143.885" stroke-dashoffset="-44.272" transform="rotate(-90 150 424.1)"/><circle cx="150" cy="424.1" r="22.9" fill="none" stroke="#ff6a00" stroke-width="3.2" stroke-dasharray="11.068 143.885" stroke-dashoffset="-49.806" transform="rotate(-90 150 424.1)"/><circle cx="150" cy="424.1" r="22.9" fill="none" stroke="#ff8a2a" stroke-width="3.2" stroke-dasharray="5.534 143.885" stroke-dashoffset="-60.874" transform="rotate(-90 150 424.1)"/><circle cx="150" cy="424.1" r="22.9" fill="none" stroke="#ff9a00" stroke-width="3.2" stroke-dasharray="60.874 143.885" stroke-dashoffset="-66.408" transform="rotate(-90 150 424.1)"/><circle cx="150" cy="424.1" r="22.9" fill="none" stroke="#ffae33" stroke-width="3.2" stroke-dasharray="5.534 143.885" stroke-dashoffset="-127.283" transform="rotate(-90 150 424.1)"/><circle cx="150" cy="424.1" r="22.9" fill="none" stroke="#ffc266" stroke-width="3.2" stroke-dasharray="5.534 143.885" stroke-dashoffset="-132.817" transform="rotate(-90 150 424.1)"/><circle cx="150" cy="424.1" r="22.9" fill="none" stroke="#ffdca8" stroke-width="3.2" stroke-dasharray="5.534 143.885" stroke-dashoffset="-138.351" transform="rotate(-90 150 424.1)"/><circle cx="744.05" cy="424.05" r="22.75" fill="none" stroke="#0a57dc" stroke-width="3.4" stroke-dasharray="33.634 142.942" stroke-dashoffset="0.000" transform="rotate(-90 744.05 424.05)"/><circle cx="744.05" cy="424.05" r="22.75" fill="none" stroke="#8ec9f5" stroke-width="3.4" stroke-dasharray="109.309 142.942" stroke-dashoffset="-33.634" transform="rotate(-90 744.05 424.05)"/></svg>
</div></body></html>
